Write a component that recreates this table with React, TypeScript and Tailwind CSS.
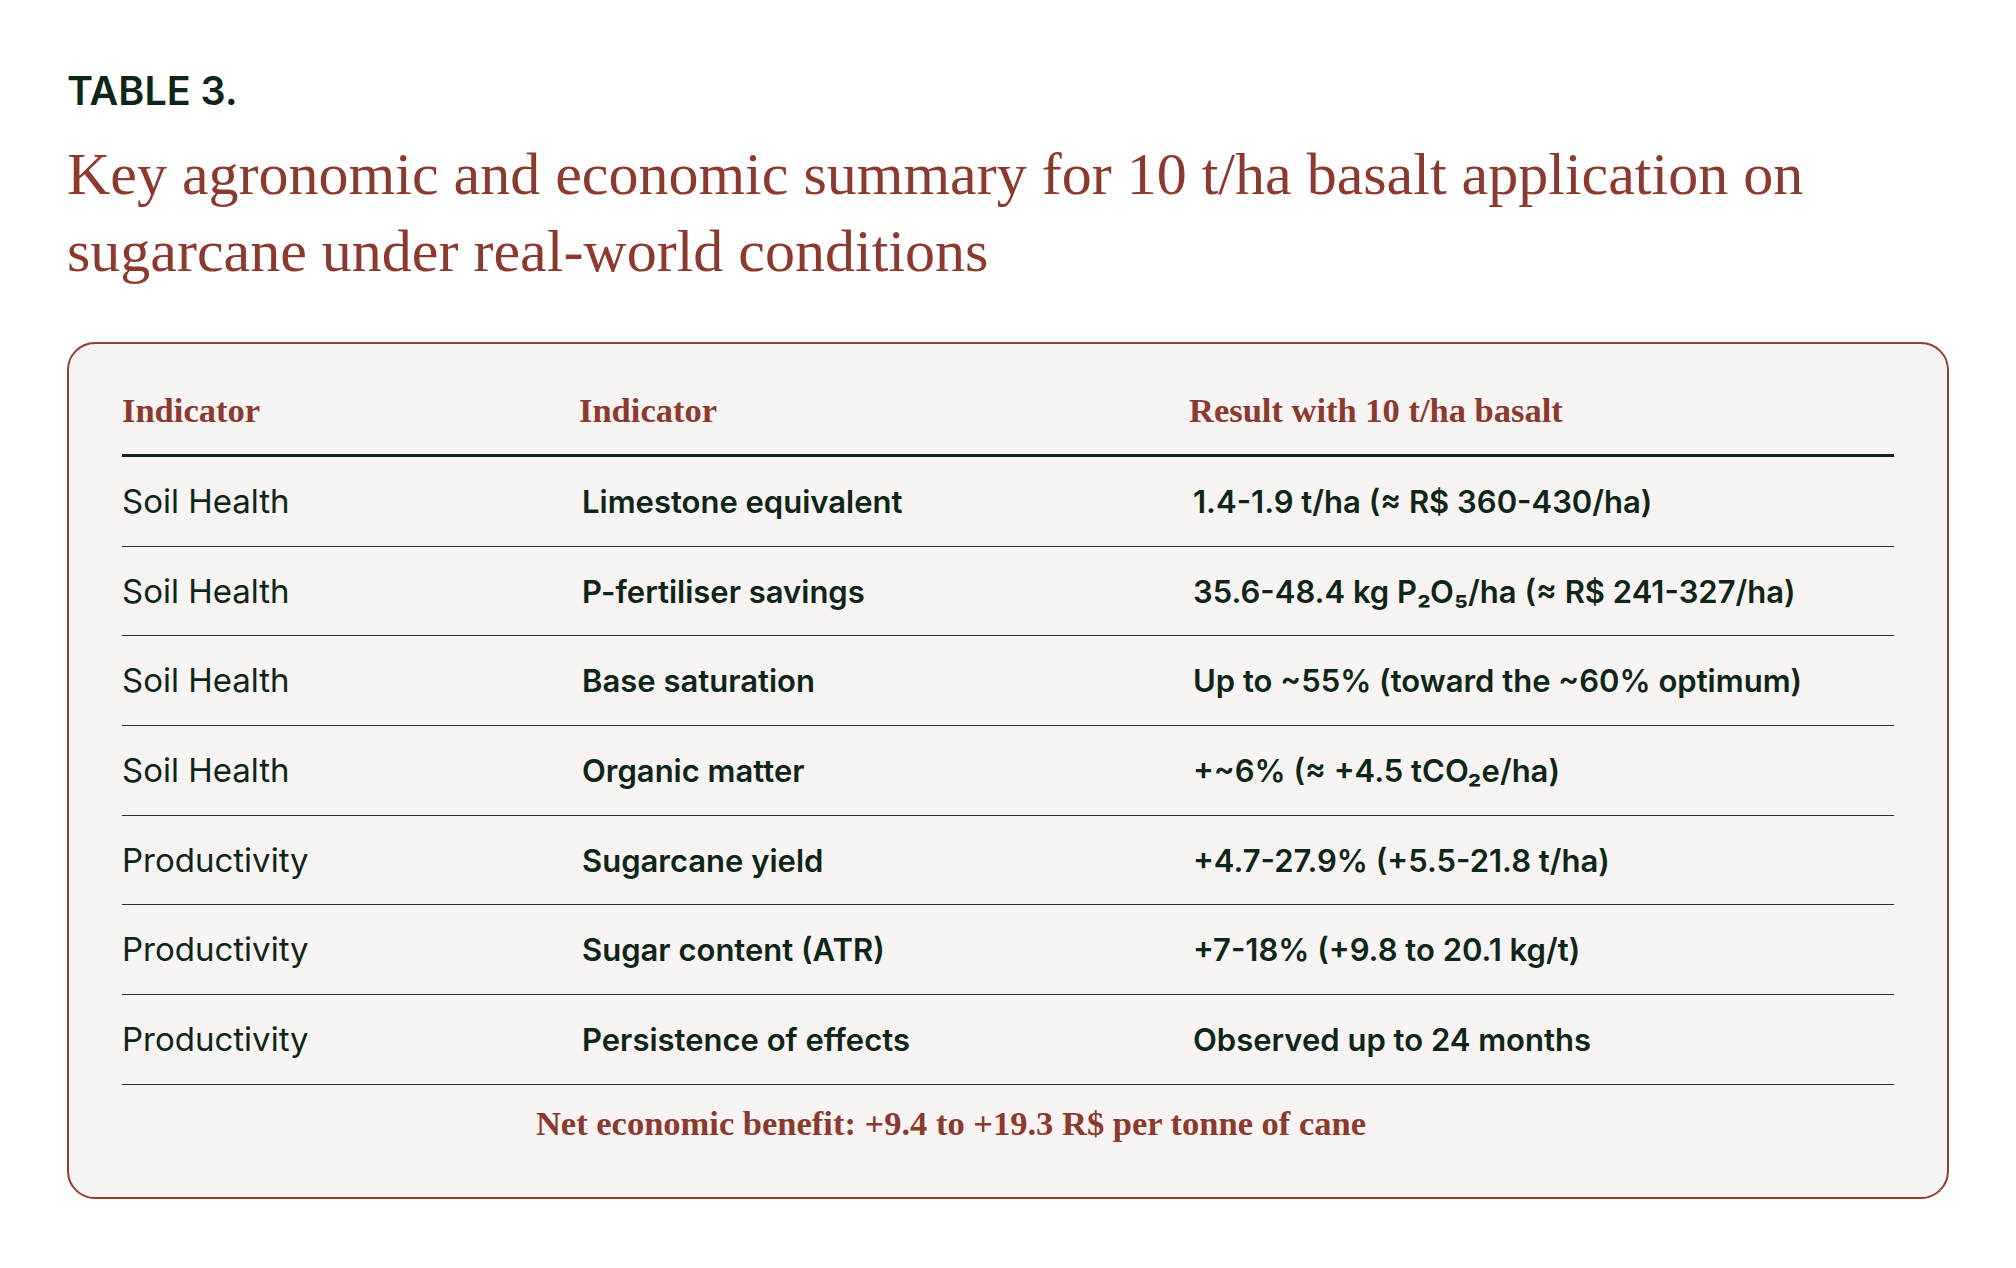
const rows = [
  { group: "Soil Health", indicator: "Limestone equivalent", result: "1.4-1.9 t/ha (≈ R$ 360-430/ha)" },
  { group: "Soil Health", indicator: "P-fertiliser savings", result: "35.6-48.4 kg P₂O₅/ha (≈ R$ 241-327/ha)" },
  { group: "Soil Health", indicator: "Base saturation", result: "Up to ~55% (toward the ~60% optimum)" },
  { group: "Soil Health", indicator: "Organic matter", result: "+~6% (≈ +4.5 tCO₂e/ha)" },
  { group: "Productivity", indicator: "Sugarcane yield", result: "+4.7-27.9% (+5.5-21.8 t/ha)" },
  { group: "Productivity", indicator: "Sugar content (ATR)", result: "+7-18% (+9.8 to 20.1 kg/t)" },
  { group: "Productivity", indicator: "Persistence of effects", result: "Observed up to 24 months" },
];

const serif = "font-['Liberation_Serif',serif]";
const sans = "font-['Inter',sans-serif]";

export default function App() {
  return (
    <div className="min-h-screen bg-white px-[67px] pt-[72px] pb-10">
      {/* Heading */}
      <p className={`${sans} text-[39.5px] leading-none font-semibold text-[#0e2617]`}>TABLE 3.</p>
      <h1 className={`${serif} mt-[24px] text-[60px] leading-[77px] font-normal text-[#8c3a2d]`}>
        Key agronomic and economic summary for 10 t/ha basalt application on sugarcane under real-world conditions
      </h1>

      {/* Card */}
      <div className="mt-[52px] rounded-[28px] border-2 border-[#93402f] bg-[#f8f4f3] px-[53px] pt-[49px] pb-[57px]">
        <div className={`grid grid-cols-[457px_610px_1fr] border-b-[3px] border-[#0e2617] pb-[27px] ${serif} text-[34.5px] leading-none font-bold text-[#8c3a2d]`}>
          <div>Indicator</div>
          <div>Indicator</div>
          <div>Result with 10 t/ha basalt</div>
        </div>

        {rows.map((r, i) => (
          <div
            key={i}
            className={`grid h-[89.7px] grid-cols-[457px_610px_1fr] items-center border-b border-[#1d3326] ${sans} leading-none text-[#0e2617]`}
          >
            <div className="text-[33px] font-normal">{r.group}</div>
            <div className="pl-[3px] text-[31px] font-semibold">{r.indicator}</div>
            <div className="pl-[4px] text-[31px] font-semibold">{r.result}</div>
          </div>
        ))}

        <p className={`pt-[21px] pr-[114px] text-center ${serif} text-[34.5px] leading-none font-bold text-[#8c3a2d]`}>
          Net economic benefit: +9.4 to +19.3 R$ per tonne of cane
        </p>
      </div>
    </div>
  );
}
